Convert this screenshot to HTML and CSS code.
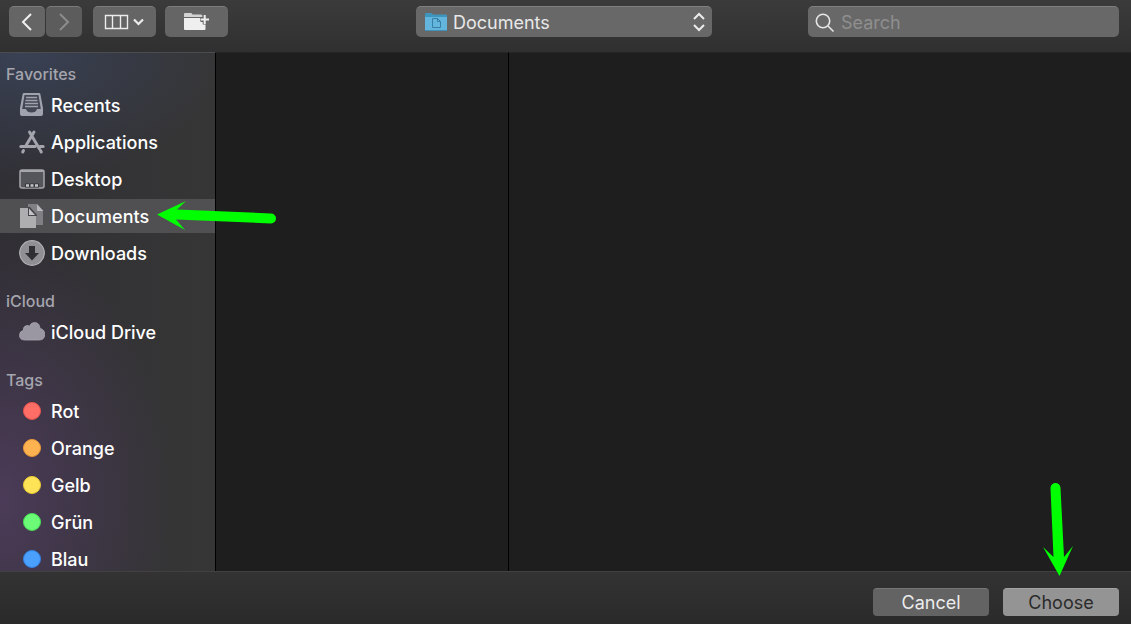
FILE: index.html
```html
<!DOCTYPE html>
<html lang="en">
<head>
    <meta charset="UTF-8">
    <meta name="viewport" content="width=device-width, initial-scale=1.0">
    <title>Documents</title>
    <link rel="stylesheet" href="styles.css">
</head>
<body>

<header class="toolbar">
    <div class="tools">
        <div class="nav-buttons">
            <button type="button" class="tool" aria-label="Back">
                <svg width="14" height="20" viewBox="0 0 14 20"><path d="M11 2 3 10l8 8" fill="none" stroke="#f0f0f0" stroke-width="2"/></svg>
            </button>
            <button type="button" class="tool" aria-label="Forward" disabled>
                <svg width="14" height="20" viewBox="0 0 14 20"><path d="m3 2 8 8-8 8" fill="none" stroke="#8c8c8c" stroke-width="2"/></svg>
            </button>
        </div>
        <button type="button" class="tool wide" aria-label="View">
            <svg width="42" height="16" viewBox="0 0 42 16" fill="none" stroke="#ececec">
                <path d="M1.5 1.5h22v13h-22zM8.500 1.5v13M16.500 1.5v13" stroke-width="1.4"/>
                <path d="m30 5.500 4.500 4.500 4.500-4.500" stroke-width="2.2"/>
            </svg>
        </button>
        <button type="button" class="tool wide" aria-label="New Folder">
            <svg width="26" height="20" viewBox="0 0 26 20">
                <path d="M0 5V2q0-1 1-1h6q1 0 1.500 1.500H17q1.500 0 1.500 1.500v1z" fill="#d2d2d2"/>
                <path d="M0 6h17v4h4.500v7q0 1-1 1H1q-1 0-1-1z" fill="#efefef"/>
                <path d="M20.700 2.500v10M16 7.500h9" stroke="#656565" stroke-width="4"/>
                <path d="M20.700 3v9M16.500 7.500h8.500" stroke="#f0f0f0" stroke-width="2"/>
            </svg>
        </button>
    </div>

    <div class="location">
        <svg class="folder-icon" width="22" height="18" viewBox="0 0 22 18">
            <path d="M0 17V1q0-1 1-1h5q1 0 2 1.500h13q1 0 1 1V17z" fill="#3f96bd"/>
            <path d="M0 4h22v13H0z" fill="#64b5de"/>
            <path d="M0 17.500h22" stroke="#4190b6"/>
            <path d="M7.500 5.500h5l3 3v6h-8zM12.500 5.500v3h3" fill="none" stroke="#3680a5"/>
        </svg>
        <select class="location-select" aria-label="Location">
            <option>Documents</option>
        </select>
        <svg class="stepper-icon" width="12" height="20" viewBox="0 0 12 20"><path d="m1 7 5-5 5 5M1 13l5 5 5-5" fill="none" stroke="#ececec" stroke-width="2"/></svg>
    </div>

    <div class="search">
        <svg class="search-icon" width="20" height="20" viewBox="0 0 20 20" fill="none" stroke="#e6e6e6" stroke-width="1.6"><circle cx="8" cy="8" r="6.7"/><path d="m13 13 5.500 5.500"/></svg>
        <input type="search" placeholder="Search" aria-label="Search">
    </div>
</header>

<main class="browser">
    <nav class="sidebar">
        <h2>Favorites</h2>
        <ul>
            <li><a href="#recents">
                <svg class="icon" width="26" height="26" viewBox="0 0 26 26">
                    <path d="M5 1h15q1.200 0 1.400 1.200L24 16v6q0 2-2 2H3q-2 0-2-2v-6L3.600 2.200Q3.800 1 5 1z" fill="#a0a3ae"/>
                    <path d="M5.500 3h14l2.300 14H18q-1 3.500-5.500 3.500T7 17H3.200z" fill="#434755"/>
                    <path d="M7 5.500h11M6.500 8.500h12M6 11.500h13M6 14.500h13" stroke="#a0a3ae" stroke-width="1.5"/>
                </svg>
                Recents</a></li>
            <li><a href="#applications">
                <svg class="icon" width="26" height="26" viewBox="0 0 26 26" fill="none" stroke="#a3a4ac" stroke-width="3" stroke-linecap="round">
                    <path d="M10.500 3 20.500 20M15 3 7 16.500M1.800 17.500H16M21 17.500h3.200M4.500 21.500l-.8 1.500M21.500 21.500l.8 1.500"/>
                </svg>
                Applications</a></li>
            <li><a href="#desktop">
                <svg class="icon" width="26" height="26" viewBox="0 0 26 26">
                    <rect x="1" y="4" width="24" height="18" rx="2" fill="#55565b" stroke="#a6a7ab" stroke-width="1.5"/>
                    <path d="M1.500 5h23" stroke="#a6a7ab" stroke-width="2"/>
                    <path d="M6 17.500h14v4H6z" fill="#333438"/>
                    <path d="M7 19.500h3M11.500 19.500h3M16 19.500h3" stroke="#c5c5c8" stroke-width="2.4"/>
                </svg>
                Desktop</a></li>
            <li><a href="#documents" class="selected">
                <svg class="icon" width="26" height="26" viewBox="0 0 26 26">
                    <path d="M9 1h9v7h6v14H9z" fill="#808084"/>
                    <path d="M18 1v7h6.500z" fill="#b9b9bc"/>
                    <path d="M1 5h8v8h8v12H1z" fill="#aeaeb1"/>
                    <path d="M9 4h2l7 8v1H9z" fill="#47474b"/>
                    <path d="M10 5.500V12h6z" fill="#c6c6c8"/>
                </svg>
                Documents</a></li>
            <li><a href="#downloads">
                <svg class="icon" width="26" height="26" viewBox="0 0 26 26">
                    <circle cx="13" cy="13" r="12.300" fill="#8f8f94" stroke="#b0b0b3" stroke-width="1.200"/>
                    <path d="M10 6h6v7h4l-7 7.500L6 13h4z" fill="#303034"/>
                </svg>
                Downloads</a></li>
        </ul>

        <h2>iCloud</h2>
        <ul>
            <li><a href="#icloud">
                <svg class="icon" width="26" height="26" viewBox="0 0 26 26">
                    <path d="M6 21q-5.500 0-5.500-4.700 0-4 3.700-4.800Q4.200 7 7.800 6.500q1.500-.2 2.700.7Q12 3.500 15.500 3.500q5 0 5.500 6 4.800 1 4.800 6Q25.500 21 20 21z" fill="#9b97a2" stroke="#aaa7b0" stroke-width=".8"/>
                </svg>
                iCloud Drive</a></li>
        </ul>

        <h2>Tags</h2>
        <ul>
            <li><a href="#rot"><span class="tag red"></span>Rot</a></li>
            <li><a href="#orange"><span class="tag orange"></span>Orange</a></li>
            <li><a href="#gelb"><span class="tag yellow"></span>Gelb</a></li>
            <li><a href="#gruen"><span class="tag green"></span>Grün</a></li>
            <li><a href="#blau"><span class="tag blue"></span>Blau</a></li>
        </ul>
    </nav>
    <section class="column"></section>
    <section class="column last"></section>

    <svg class="arrow-documents" width="120" height="30" viewBox="0 0 120 30"><path d="M0 14.500 29 1l-9 8.500 94 4a5 5 0 0 1 0 10L19 19.500 28 30z" fill="#00ff00"/></svg>
</main>

<footer class="actions">
    <button type="button" class="action">Cancel</button>
    <div class="choose">
        <button type="button" class="action primary">Choose</button>
        <svg class="arrow-choose" width="30" height="94" viewBox="0 0 30 94"><path d="M7.500 6a5 5 0 0 1 10 0L21 75l9-11-13.500 30L0 65l10.500 10z" fill="#00ff00"/></svg>
    </div>
</footer>

</body>
</html>
```

FILE: styles.css
```css
* {
    box-sizing: border-box;
}

body {
    display: flex;
    flex-direction: column;
    height: 100vh;
    margin: 0;
    overflow: hidden;
    background-color: #1e1e1e;
    color: #fff;
    font-family: Inter, "Liberation Sans", sans-serif;
    font-size: 18px;
}

button, input, select {
    font: inherit;
}

svg {
    display: block;
    flex: none;
}

/* Toolbar */
.toolbar {
    display: grid;
    grid-template-columns: 1fr 296px 1fr;
    align-items: start;
    padding: 6px 12px 15px 9px;
    background: linear-gradient(#3b3b3b, #303030);
}

.tools {
    display: flex;
    gap: 9px;
}

.nav-buttons {
    display: flex;
    gap: 1px;
    margin-right: 2px;
}

.tool {
    display: flex;
    align-items: center;
    justify-content: center;
    width: 36px;
    height: 31px;
    padding: 0;
    border: none;
    border-top: 1px solid #7c7c7c;
    border-radius: 5px;
    background-color: #656565;
}

.tool:disabled {
    background-color: #5c5c5c;
}

.tool.wide {
    width: 63px;
}

.location, .search {
    position: relative;
}

.location-select {
    display: block;
    width: 100%;
    height: 31px;
    padding: 0 32px 0 37px;
    border: none;
    border-top: 1px solid #7f7f7f;
    border-radius: 5px;
    background-color: #686868;
    color: #e8e8e8;
    appearance: none;
}

.folder-icon, .stepper-icon, .search-icon {
    position: absolute;
    pointer-events: none;
}

.folder-icon {
    top: 7px;
    left: 9px;
}

.stepper-icon {
    top: 6px;
    right: 7px;
}

.search {
    margin-left: 96px;
}

.search input {
    display: block;
    width: 100%;
    height: 31px;
    padding: 0 8px 0 33px;
    border: none;
    border-top: 1px solid #7f7f7f;
    border-radius: 5px;
    background-color: #686868;
    color: #e8e8e8;
    appearance: none;
}

.search input::placeholder {
    color: #8f8f8f;
}

.search-icon {
    top: 7px;
    left: 7px;
}

/* File browser */
.browser {
    position: relative;
    display: flex;
    flex: 1;
    min-height: 0;
}

.sidebar {
    flex: none;
    width: 216px;
    padding-top: 10px;
    overflow: hidden;
    border-top: 1px solid #4b4c50;
    border-right: 1px solid #000;
    background:
        radial-gradient(ellipse 170px 260px at 0 86%, #4b3b58, rgba(75, 59, 88, 0)),
        radial-gradient(ellipse 200px 130px at 10% 0, #394154, rgba(57, 65, 84, 0)),
        linear-gradient(90deg, #302f34, #363636);
}

.sidebar h2 {
    margin: 0 0 3px;
    padding-left: 6px;
    color: #a5a5ae;
    font-size: 16px;
    font-weight: 500;
    line-height: 22px;
}

.sidebar ul {
    display: flex;
    flex-direction: column;
    gap: 3px;
    margin: 0 0 20px;
    padding: 0;
    list-style: none;
}

.sidebar a {
    display: flex;
    align-items: center;
    gap: 6px;
    height: 34px;
    padding-left: 19px;
    color: #fff;
    font-weight: 500;
    text-decoration: none;
}

.sidebar a.selected {
    background-color: #505053;
}

.tag {
    width: 18px;
    height: 18px;
    margin: 0 4px;
    border: 1px solid;
    border-radius: 50%;
}

.red {
    background-color: #ff6e66;
    border-color: #e9544e;
}

.orange {
    background-color: #ffb350;
    border-color: #ea993a;
}

.yellow {
    background-color: #ffe357;
    border-color: #ebcc38;
}

.green {
    background-color: #6cfb76;
    border-color: #48df56;
}

.blue {
    background-color: #4ba0ff;
    border-color: #3082e8;
}

.column {
    width: 293px;
    border-top: 1px solid #262626;
    border-right: 1px solid #000;
}

.column.last {
    flex: 1;
    border-right: none;
}

.arrow-documents {
    position: absolute;
    top: 148px;
    left: 157px;
}

/* Bottom buttons */
.actions {
    display: flex;
    justify-content: flex-end;
    gap: 14px;
    padding: 16px 12px 8px;
    border-top: 1px solid #414141;
    background: linear-gradient(#333, #2a2a2a);
}

.action {
    display: block;
    width: 116px;
    height: 28px;
    padding: 0;
    border: none;
    border-top: 1px solid #777;
    border-radius: 4px;
    background-color: #636363;
    color: #ececec;
}

.action.primary {
    border-top-color: #a3a3a3;
    background-color: #949494;
    color: #2b2b2b;
}

.choose {
    position: relative;
}

.arrow-choose {
    position: absolute;
    bottom: 40px;
    left: 40px;
}
```
